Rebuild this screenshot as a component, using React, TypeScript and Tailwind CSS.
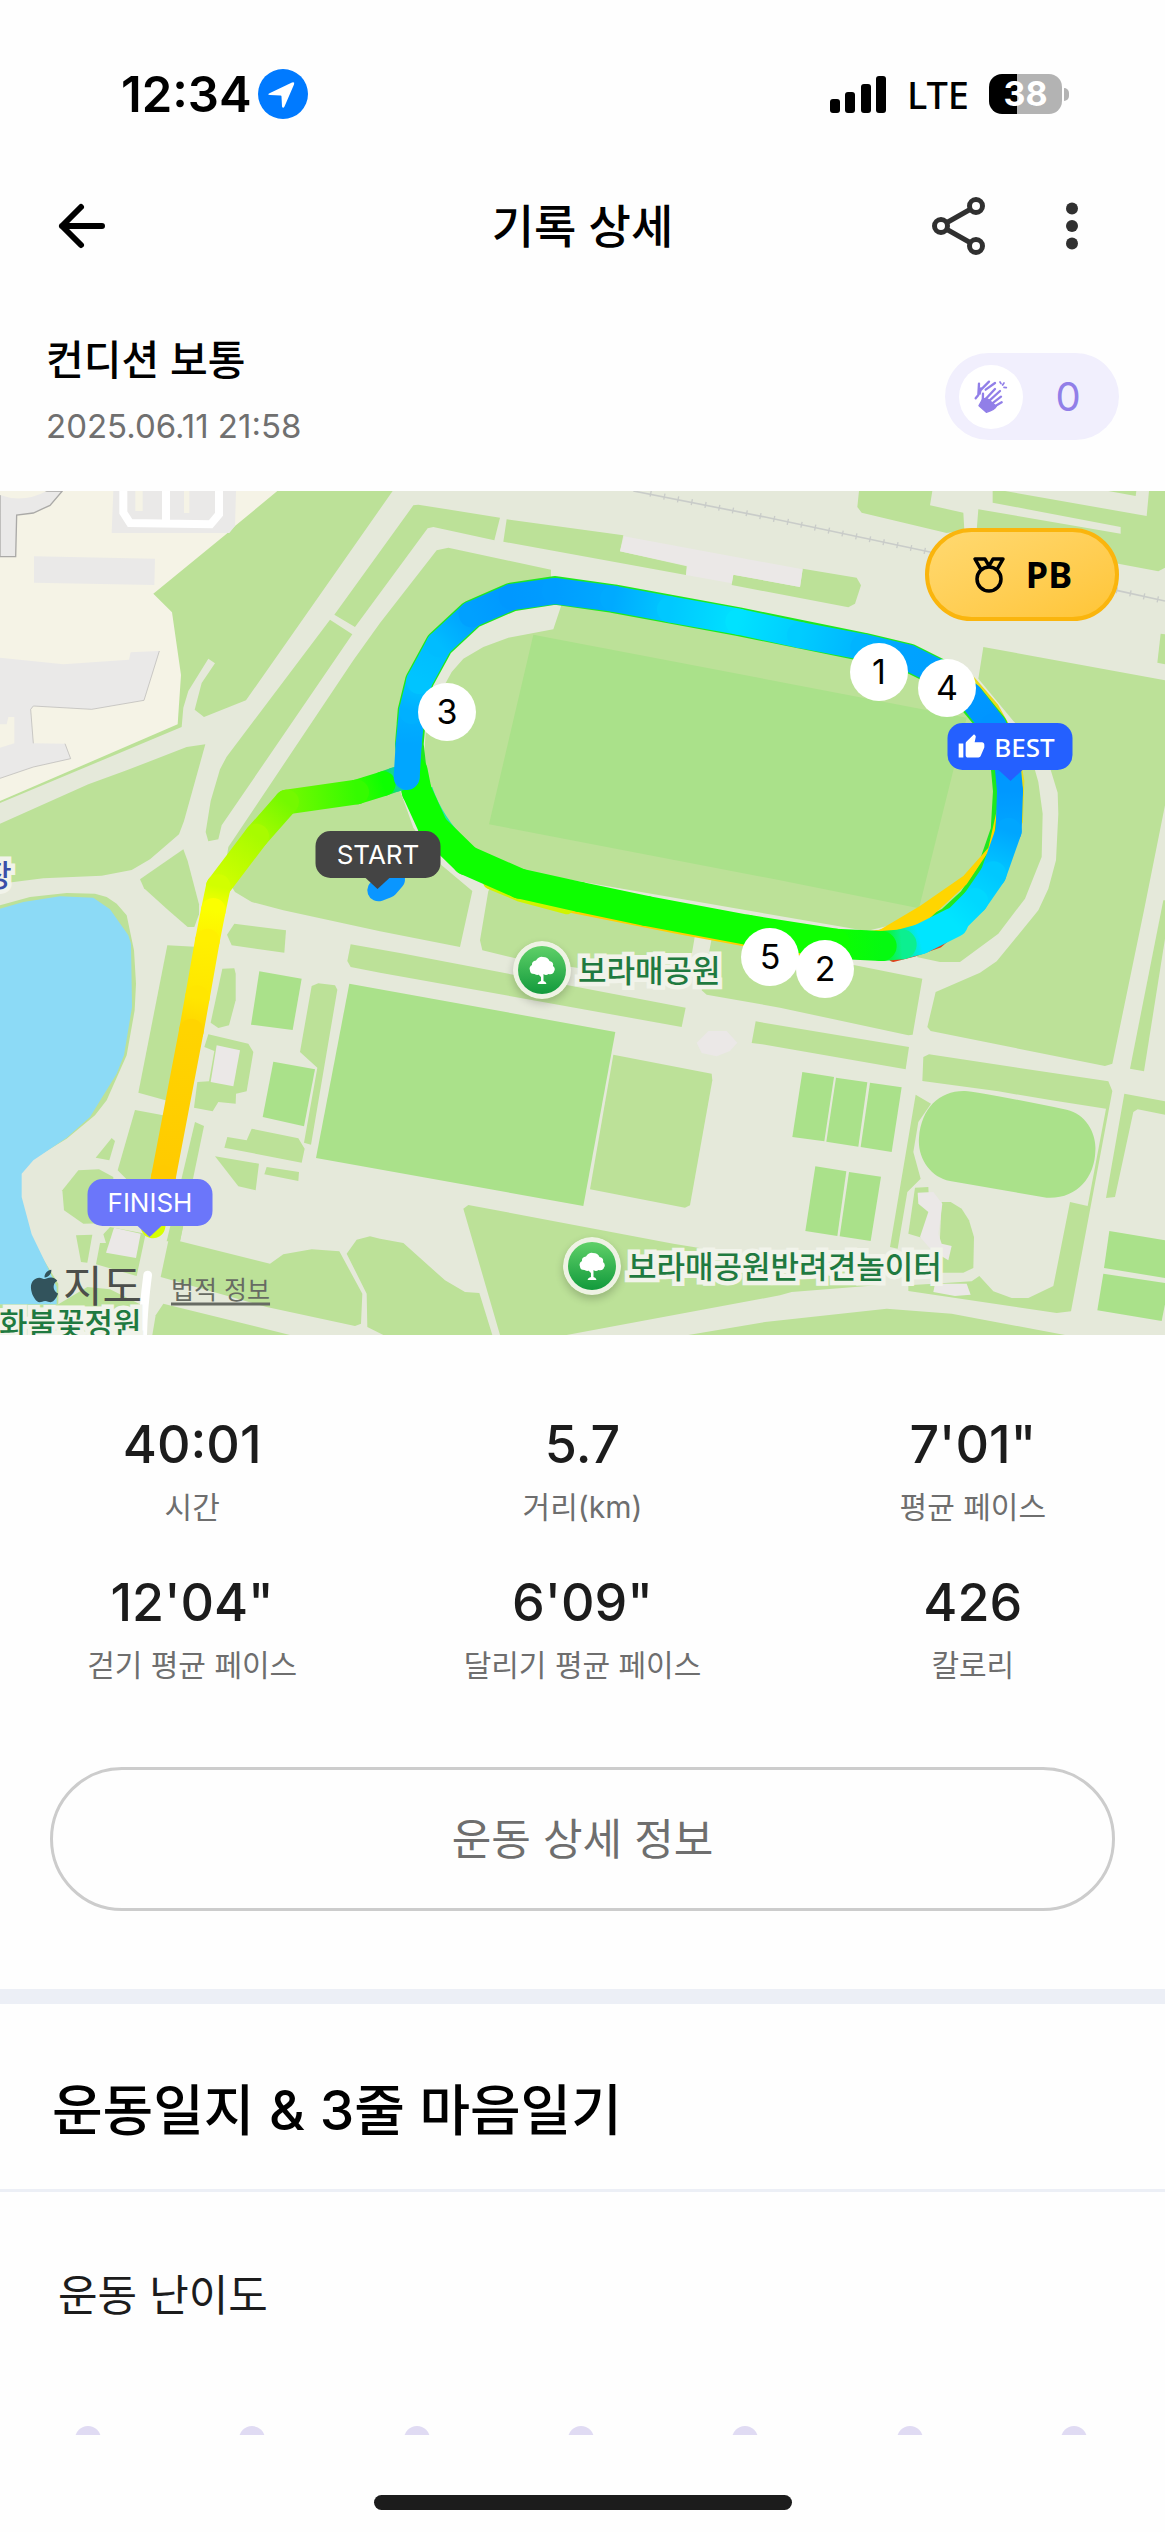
import { FaApple } from "react-icons/fa";
import { MdThumbUp } from "react-icons/md";

type Point = [x: number, y: number, color: string];

const MAP_W = 3495;
const MAP_H = 2532;

const parks = [
  "0,936 545,708 550,650 565,600 625,503 645,517 605,576 584,656 612,678 738,628 1178,0 0,0",
  "0,998 265,880 380,838 560,768 616,760 552,990 537,1030 450,1105 395,1137 305,1154 130,1162 0,1178",
  "550,1075 563,1110 597,1240 597,1270 583,1308 563,1308 505,1258 432,1192 420,1165",
  "990,386 1057,430 665,1003 655,1045 625,1051 617,1023 632,930 660,835 680,797",
  "1003,371 1240,43 1255,41 1500,80 1483,148 1300,108 1283,112 1065,408",
  "1520,85 1870,133 1860,181 2060,226 2058,252 1510,152",
  "2200,251 2400,288 2408,233 2570,260 2583,283 2565,338 2545,349 2195,282",
  "2577,0 2572,48 2585,65 2840,126 2893,118 2890,65 2790,43 2797,0",
  "2978,0 2978,35 3362,108 3362,128 2935,55 2930,118 3355,218 3475,241 3495,230 3495,0 3447,0 3440,75 3015,0",
  "3325,0 3407,15 3409,0",
  "1345,170 1310,178 1140,396 1060,508 685,1068 672,1150 705,1203 755,1233 850,1258 1140,1321 1380,1368 1417,1200 1325,1123 1240,1010 1200,898 1190,830 1190,700 1220,560 1310,420 1420,330 1560,280 1653,262 1653,236",
  "1685,340 1660,415 1525,440 1450,468 1390,503 1355,543 1280,680 1270,830 1310,950 1400,1060 1500,1130 2600,1320 2850,1260 2990,1100 3010,800 2960,650 2900,580 2750,500 1690,320",
  "2950,468 3495,568 3495,943 3432,1258 3337,1718 3315,1725 2792,1620 2782,1608 2807,1503 2940,1445 2990,1411 3115,1258 3145,1193 3168,1108 3175,968 3173,905 3150,830 3110,760 3040,690 2935,563",
  "3105,838 3115,873 3128,968 3125,1098 3075,1223 2995,1328 2880,1413 2820,1413 2750,1398 2850,1300 3000,1100 3060,900 3040,760",
  "3482,428 3495,430 3495,520 3472,515",
  "3490,1228 3495,1228 3495,1343 3432,1741 3390,1733",
  "3373,1808 3495,1831 3495,1871 3413,1855 3400,1863 3345,2118 3318,2121",
  "2787,1690 3325,1771 3337,1800 3213,2461 3170,2466 2725,2400 2725,2383 2800,2378 2915,2371 2938,2355 2980,2401 3035,2421 3085,2421 3160,2385 3210,2133 3263,2145 3318,1853 3155,1828 2995,1801 2767,1770 2770,1698",
  "2747,1811 2793,1838 2755,1893 2740,1983 2762,2063 2722,2103 2693,2273 2670,2268",
  "2745,2090 2785,2088 2790,2200 2765,2240 2725,2228",
  "2825,2133 2852,2133 2885,2153 2907,2188 2922,2238 2920,2331 2890,2345 2815,2345",
  "2065,2532 2295,2493 2660,2453 2855,2468 3195,2532",
  "1390,2153 1405,2142 2020,2258 2400,2320 2650,2355 2640,2382 2375,2403 2340,2413 1700,2532 1500,2532",
  "1140,2243 1210,2256 1335,2368 1395,2403 1438,2406 1477,2532 1150,2532 1102,2508 1100,2408 1040,2288 1070,2246 1110,2236",
  "540,2251 810,2318 850,2290 935,2275 1018,2281 1087,2408 1083,2498 1065,2505 800,2448 482,2358 515,2203 550,2203",
  "490,2438 870,2532 457,2532 467,2473",
  "502,1363 640,1370 540,1840 415,1805",
  "405,1857 530,1880 490,2100 385,2070 353,2038",
  "335,1941 345,1950 328,2008 287,2000",
  "235,2038 297,2035 340,2058 340,2196 250,2198 192,2158 187,2098",
  "585,1893 612,1905 540,2251 500,2251",
  "228,2233 277,2231 262,2315 243,2313",
  "310,2230 330,2208 437,2228 410,2355 288,2320 300,2256 318,2256",
  "175,2440 262,2388 330,2395 420,2440 420,2532 0,2532 0,2440",
  "703,1298 858,1318 853,1385 695,1363 681,1331",
  "667,1433 703,1432 707,1448 707,1528 687,1603 655,1611 632,1595",
  "625,1630 745,1658 760,1683 740,1801 708,1808 707,1838 655,1833 638,1861 582,1850 592,1773 627,1771 643,1680 613,1668",
  "1052,1360 1200,1386 2057,1550 2045,1608 1140,1445 1052,1428 1042,1410",
  "955,1477 1005,1483 1012,1496 933,1961 912,1955 952,1730 900,1683 935,1485",
  "755,1913 895,1942 914,1973 905,2015 673,1970 682,1938 740,1948",
  "645,1996 777,2018 767,2098 715,2086",
  "800,2028 897,2043 895,2070 793,2050",
  "1840,1691 2135,1748 2137,1768 2070,2143 2055,2150 1770,2095",
  "1465,1200 1440,1348 1447,1378 1560,1405 2060,1480 2085,1333 1900,1280 1500,1150",
  "2135,1343 2105,1498 2120,1511 2340,1550 2725,1633 2738,1631 2767,1463 2565,1423",
  "2267,1591 2727,1668 2717,1735 2295,1661 2255,1656",
];

const pitches = [
  "1600,431 2900,680 2860,838 2757,1252 2340,1168 1467,1000",
  "778,1441 905,1463 878,1617 753,1601",
  "820,1712 945,1735 912,1906 788,1878",
  "1048,1478 1846,1623 1750,2145 948,2001",
  "2407,1743 2502,1758 2473,1951 2377,1938",
  "2508,1760 2602,1774 2575,1967 2479,1952",
  "2610,1775 2705,1789 2675,1983 2582,1968",
  "2446,2026 2539,2041 2512,2235 2416,2220",
  "2547,2043 2643,2057 2612,2250 2519,2236",
  "3328,2220 3495,2248 3495,2361 3312,2331",
  "3310,2348 3495,2376 3495,2440 3485,2490 3292,2458",
];

const buildings = [
  "1872,136 2408,235 2400,288 2200,251 2195,277 2058,252 2062,224 1860,181",
  "650,1663 720,1678 700,1786 632,1773",
  "342,2210 422,2228 408,2301 318,2285",
  "2753,2105 2800,2103 2827,2138 2815,2228 2825,2258 2855,2265 2845,2308 2795,2278 2760,2238 2785,2163 2755,2138",
  "2805,2378 2900,2378 2912,2411 2865,2415 2800,2403",
];

const greenLap: Point[] = [
  [2860, 1295, "#00e5ff"],
  [2760, 1345, "#00e5ff"],
  [2705, 1360, "#0cef90"],
  [2645, 1365, "#05fa10"],
  [2505, 1358, "#0dff00"],
  [2240, 1316, "#0dff00"],
  [1940, 1260, "#0dff00"],
  [1740, 1218, "#0dff00"],
  [1560, 1178, "#0dff00"],
  [1400, 1108, "#0dff00"],
  [1300, 1010, "#0dff00"],
  [1250, 900, "#0dff00"],
  [1238, 840, "#0dff00"],
];

const blueLap: Point[] = [
  [1220, 858, "#00a6ff"],
  [1226, 760, "#00a6ff"],
  [1236, 660, "#00b0ff"],
  [1258, 570, "#00c4ff"],
  [1318, 460, "#00bcff"],
  [1415, 370, "#00a0ff"],
  [1535, 318, "#0098ff"],
  [1665, 300, "#009dff"],
  [1840, 323, "#00aaff"],
  [2010, 355, "#00c8ff"],
  [2215, 392, "#00e2ff"],
  [2400, 432, "#00ccff"],
  [2590, 468, "#00b4ff"],
  [2725, 500, "#00a2ff"],
  [2830, 552, "#00a0ff"],
  [2910, 615, "#0098ff"],
  [2980, 705, "#0094ff"],
  [3020, 790, "#0096ff"],
  [3030, 900, "#0098ff"],
  [3026, 1020, "#00a6ff"],
  [2980, 1150, "#00c8ff"],
  [2925, 1230, "#00d8ff"],
  [2860, 1295, "#00e5ff"],
];

const exitLeg: Point[] = [
  [1222, 856, "#0fb4d8"],
  [1185, 866, "#14d29a"],
  [1150, 878, "#0dff00"],
  [1070, 903, "#35fb00"],
  [860, 933, "#74f900"],
  [770, 1035, "#a8fb00"],
  [655, 1187, "#d2ff00"],
  [640, 1258, "#fbff00"],
  [622, 1350, "#fff000"],
  [592, 1520, "#ffe600"],
  [574, 1620, "#ffd400"],
  [490, 2060, "#ffca00"],
  [459, 2205, "#d8ff00"],
];

const kmMarkers = [
  { label: "3", x: 447, y: 712 },
  { label: "1", x: 879, y: 672 },
  { label: "4", x: 947, y: 688 },
  { label: "5", x: 770, y: 957 },
  { label: "2", x: 825, y: 969 },
];

const stats = [
  { value: "40:01", label: "시간" },
  { value: "5.7", label: "거리(km)" },
  { value: "7'01\"", label: "평균 페이스" },
  { value: "12'04\"", label: "걷기 평균 페이스" },
  { value: "6'09\"", label: "달리기 평균 페이스" },
  { value: "426", label: "칼로리" },
];

// Map points are kept on a 1165-wide page whose map starts at y=491
const place = (x: number, y: number) => ({
  left: `${(x / 1165) * 100}%`,
  top: `${((y - 491) / 844) * 100}%`,
});

function StatusBar() {
  return (
    <div className="flex h-[132px] items-center justify-between pt-[56px] pr-[96px] pl-[121px]">
      <div className="flex items-center gap-[6px]">
        <span className="text-[49px] leading-none font-semibold text-black">12:34</span>
        <svg viewBox="0 0 50 50" className="size-[50px]">
          <circle cx="25" cy="25" r="25" fill="#007aff" />
          <path d="M12 24 34 13.500Q37 12.500 36 15.500L26.500 37.500Q25 40 24 37.500L23.500 27.500Q23.500 26.500 22.500 26.500L12 26Q8.500 25.500 12 24Z" fill="#fff" />
        </svg>
      </div>
      <div className="flex items-center">
        <svg viewBox="0 0 57 37" className="h-[37px] w-[57px]">
          <rect x="0" y="23" width="10" height="14" rx="3" />
          <rect x="15" y="16" width="10" height="21" rx="3" />
          <rect x="31" y="8" width="10" height="29" rx="3" />
          <rect x="46" y="0" width="10" height="37" rx="3" />
        </svg>
        <span className="ml-[20px] font-['Noto_Sans'] text-[38px] leading-none font-medium">LTE</span>
        <div className="ml-[20px] flex h-[40px] w-[73px] items-center justify-center rounded-[13px] bg-[linear-gradient(90deg,#000_39%,#b3b3b3_39%)] text-[34px] leading-none font-bold text-white">
          38
        </div>
        <div className="ml-[2px] h-[13px] w-[5px] rounded-r-full bg-[#b3b3b3]" />
      </div>
    </div>
  );
}

function Header() {
  return (
    <header className="grid h-[188px] grid-cols-[1fr_auto_1fr] items-center px-[56px]">
      <button type="button" aria-label="뒤로" className="justify-self-start">
        <svg viewBox="0 0 50 50" className="size-[50px]" fill="none" stroke="#000" strokeWidth="6" strokeLinecap="round" strokeLinejoin="round">
          <path d="M46 25H6M25 6 6 25l19 19" />
        </svg>
      </button>
      <h1 className="text-[46px] leading-none font-medium text-black">기록 상세</h1>
      <div className="flex items-center gap-[74px] justify-self-end pr-[24px]">
        <button type="button" aria-label="공유">
          <svg viewBox="0 0 54 60" className="h-[60px] w-[54px]" fill="none" stroke="#303030" strokeWidth="5">
            <circle cx="10" cy="30" r="6.500" />
            <circle cx="45" cy="10" r="6.500" />
            <circle cx="45" cy="50" r="6.500" />
            <path d="M16 26.500 39 13.500M16 33.500 39 46.500" />
          </svg>
        </button>
        <button type="button" aria-label="더보기">
          <svg viewBox="0 0 26 48" className="h-[48px] w-[26px]" fill="#303030">
            <circle cx="13" cy="6.500" r="6" />
            <circle cx="13" cy="24" r="6" />
            <circle cx="13" cy="41.500" r="6" />
          </svg>
        </button>
      </div>
    </header>
  );
}

function ClapIcon() {
  return (
    <svg viewBox="105 103 102 102" className="size-[34px]" fill="none" stroke="#917fe8" strokeWidth="7" strokeLinecap="round" strokeLinejoin="round">
      {/* Back hand */}
      <path d="M120 114 118 148 110 158M124 134 150 108M140 132 168 112M126 128 122 144" />
      {/* Front hand */}
      <path d="M140 160 168 130M148 168 183 136M156 176 186 153M164 184 188 170M132 144 131 172" />
      <path d="M131 160Q140 156 146 160L172 182Q168 192 142 200L120 180Z" fill="#917fe8" strokeWidth="4" />
      <path d="M183 109 186 114M195 112 191 118M202 126 195 125" strokeWidth="5" />
    </svg>
  );
}

function Condition() {
  return (
    <section className="flex h-[171px] items-center justify-between px-[46px] pb-[18px]">
      <div className="pb-[8px]">
        <h2 className="text-[41px] leading-[60px] font-medium text-black">컨디션 보통</h2>
        <time className="mt-[6px] block text-[33px] leading-[60px] text-[#707070]">2025.06.11 21:58</time>
      </div>
      <button type="button" className="flex h-[87px] w-[174px] items-center rounded-full bg-[#f1effd] pl-[14px] text-[#917fe8]">
        <span className="flex size-[64px] items-center justify-center rounded-full bg-white">
          <ClapIcon />
        </span>
        <span className="flex-1 pr-[6px] text-center text-[40px] leading-none">0</span>
      </button>
    </section>
  );
}

function Track({ id, points, width }: { id: string; points: Point[]; width: number }) {
  return (
    <g strokeWidth={width} strokeLinecap="round">
      {points.slice(1).map(([x2, y2, to], i) => {
        const [x1, y1, from] = points[i];
        return (
          <g key={i}>
            <linearGradient id={`${id}-${i}`} gradientUnits="userSpaceOnUse" x1={x1} y1={y1} x2={x2} y2={y2}>
              <stop offset="0" stopColor={from} />
              <stop offset="1" stopColor={to} />
            </linearGradient>
            <path d={`M${x1} ${y1}L${x2} ${y2}`} stroke={`url(#${id}-${i})`} />
          </g>
        );
      })}
    </g>
  );
}

function MapDrawing() {
  return (
    <svg viewBox={`0 0 ${MAP_W} ${MAP_H}`} className="block w-full bg-[#e5e9da]">
      <g fill="#bce198">
        {parks.map((points) => (
          <polygon key={points} points={points} />
        ))}
      </g>
      <g fill="#aae18a">
        {pitches.map((points) => (
          <polygon key={points} points={points} />
        ))}
        <path d="M2895 1800Q2935 1802 3200 1856C3260 1870 3290 1930 3286 1980C3284 2060 3230 2125 3140 2120L2850 2070C2790 2058 2752 2000 2757 1940C2764 1850 2820 1798 2895 1800Z" />
      </g>

      {/* Lake */}
      <path d="M0 1243 90 1218 200 1206 285 1208 320 1218 350 1238 380 1273 402 1378 408 1478 404 1558 380 1693 320 1828 285 1873 200 1943 85 2013 55 2058 52 2118 95 2248 175 2378 175 2440H0Z" fill="#bce198" />
      <path d="M0 1253 70 1233 180 1216 280 1220 330 1255 385 1333 393 1358 396 1548 372 1693 350 1748 270 1878 200 1940 100 2008 65 2048 65 2118 95 2230 145 2333 170 2388 170 2440H0Z" fill="#8cdaf6" />

      {/* Residential block */}
      <polygon points="0,0 832,0 705,105 680,128 460,308 516,364 543,552 533,700 0,930" fill="#f5f3e6" />
      <g fill="#eae9e8">
        <path d="M0 0H187L150 43 100 66 50 72 47 197H0Z" stroke="#aaa9a7" strokeWidth="4" />
        <path d="M0 12Q70 38 140 0H0Z" fill="#f5f3e6" />
        <polygon points="102,196 465,203 463,282 102,275" />
        <polygon points="340,0 708,0 705,105 688,126 335,126" />
        <path d="M0 500 190 520 387 506 392 484 478 480 432 628 275 655 100 645 92 655 100 757 195 758 212 803 100 828 0 862V770L43 757V678H25L20 700H0Z" />
        <path d="M478 480 432 628 275 655 100 645 92 655 100 757M195 758 212 803 100 828 0 862" fill="none" stroke="#b5b4b2" strokeWidth="2" />
      </g>
      <path d="M406 0H428V60H406ZM552 0H568V66H552Z" fill="#f5f3e6" />
      <path d="M370 0V65L390 96 632 100 657 70V0M498 0V98" fill="none" stroke="#fff" strokeWidth="24" />
      <path d="M443 2352Q430 2450 428 2532" fill="none" stroke="#fff" strokeWidth="26" strokeLinecap="round" />

      <g fill="#ebe8e7">
        {buildings.map((points) => (
          <polygon key={points} points={points} />
        ))}
        <path d="M2090 1655 2125 1620 2180 1620 2212 1655 2190 1680 2150 1696 2105 1686Z" />
      </g>
      <g fill="none" stroke="#c9ccc9">
        <path d="M1900 0 2295 78 2790 183 3350 298 3495 330" strokeWidth="5" />
        <path d="M1950 8 2295 78 2790 183 3350 298 3495 330" strokeWidth="18" strokeDasharray="4 38" />
      </g>

      {/* Earlier laps peeking out from under the last one */}
      <g fill="none" strokeLinejoin="round" strokeLinecap="round">
        <path d="M1470 1170 1560 1205 1700 1243 2040 1310 2230 1345 2400 1372 2600 1386" stroke="#ffd000" strokeWidth="40" />
        <path d="M1470 1175 1560 1212 1700 1250" stroke="#d0f400" strokeWidth="40" />
        <path d="M2680 1399 2745 1382 2815 1357 2860 1319" stroke="#e0401c" strokeWidth="28" />
        <path d="M2910 570 2980 650 3035 750 3056 870 3052 990" stroke="#e6dc20" strokeWidth="34" />
        <path d="M1238 850 1228 760 1236 660 1258 570 1318 460 1415 370 1535 318 1665 298 1840 323 2215 392 2590 468 2725 500 2830 552 2910 620 2980 705 3012 790 3022 900 3015 1020 2970 1150 2915 1230 2850 1290 2760 1338 2640 1360" stroke="#1fe81f" strokeWidth="86" />
      </g>
      <path d="M2992 950 2965 1070 2890 1155 2760 1245 2640 1316 2560 1325 2640 1345 2780 1290 2900 1180 2980 1060Z" fill="#ffd500" />
      <path d="M1290 890Q1320 980 1400 1060" fill="none" stroke="#16e8b0" strokeWidth="14" />
      <Track id="lap-green" points={greenLap} width={90} />
      <Track id="exit" points={exitLeg} width={74} />
      <Track id="lap-blue" points={blueLap} width={78} />
      <path d="M1135 1198 1162 1188 1182 1165" fill="none" stroke="#0a96ff" strokeWidth="66" strokeLinecap="round" strokeLinejoin="round" />
    </svg>
  );
}

function Callout({ text, x, y, className, tail, best }: { text: string; x: number; y: number; className: string; tail: string; best?: boolean }) {
  return (
    <div className="absolute flex -translate-x-1/2 flex-col items-center" style={place(x, y)}>
      <div className={`flex h-[47px] w-[125px] items-center justify-center gap-[9px] rounded-[15px] text-[26px] leading-none text-white ${className}`}>
        {best && <MdThumbUp size={28} />}
        {text}
      </div>
      <svg viewBox="0 0 26 12" className={`-mt-px h-[12px] w-[26px] ${tail}`} fill="currentColor">
        <path d="M0 0H26L13 12Z" />
      </svg>
    </div>
  );
}

function ParkLabel({ name, x, y }: { name: string; x: number; y: number }) {
  return (
    <div className="absolute flex -translate-y-1/2 items-center gap-[7px]" style={place(x, y)}>
      <svg viewBox="0 0 58 58" className="size-[58px] rounded-full shadow-[0_4px_8px_rgba(0,0,0,0.2)]">
        <linearGradient id="pin" x1="0" y1="0" x2="0" y2="1">
          <stop offset="0" stopColor="#5fd068" />
          <stop offset="1" stopColor="#129a3c" />
        </linearGradient>
        <circle cx="29" cy="29" r="29" fill="#eef2e4" />
        <circle cx="29" cy="29" r="24" fill="url(#pin)" />
        <path d="M28 32.500Q25 35 21.500 33Q17 33 17 29.500Q15.500 26 19 24Q18.500 20 23 19.500Q26 15 30 16Q35 16 36.500 20Q41 21 40 25Q43 27.500 41 30.500Q40 34 35.500 33Q33 35 30.500 33V40Q33 40.500 33.500 43H24.500Q25 40.500 28 40V36L25.500 33.500Z" fill="#fff" />
      </svg>
      <span className="text-[31px] leading-none font-medium whitespace-nowrap text-[#1f7a40] [paint-order:stroke_fill] [-webkit-text-stroke:9px_#f1f3ea]">{name}</span>
    </div>
  );
}

function RouteMap() {
  return (
    <section className="relative overflow-hidden">
      <MapDrawing />

      {kmMarkers.map(({ label, x, y }) => (
        <span
          key={label}
          className="absolute flex size-[58px] -translate-1/2 items-center justify-center rounded-full bg-white text-[34px] leading-none text-black"
          style={place(x, y)}
        >
          {label}
        </span>
      ))}

      <Callout text="START" x={378} y={831} className="bg-[#444444]" tail="text-[#444444]" />
      <Callout text="BEST" x={1010} y={723} className="bg-[#2460ff] pr-[8px] font-['Noto_Sans'] font-medium" tail="text-[#2460ff]" best />
      <Callout text="FINISH" x={150} y={1179} className="bg-[#6b76fa]" tail="text-[#6b76fa]" />

      <ParkLabel name="보라매공원" x={513} y={970} />
      <ParkLabel name="보라매공원반려견놀이터" x={563} y={1266} />
      <span className="absolute -translate-y-1/2 text-[30px] leading-none font-medium text-[#3a4fa8] [paint-order:stroke_fill] [-webkit-text-stroke:9px_#f1f3ea]" style={place(-16, 875)}>
        장
      </span>
      <span className="absolute -translate-y-1/2 text-[31px] leading-none font-medium text-[#1f7a40] [paint-order:stroke_fill] [-webkit-text-stroke:9px_#f1f3ea]" style={place(-1, 1323)}>
        화불꽃정원
      </span>

      <div className="absolute flex -translate-y-1/2 items-center text-[#32535c]" style={place(26, 1286)}>
        <FaApple size={37} />
        <span className="text-[43px] leading-none text-[#4c4f4b]">지도</span>
      </div>
      <a href="#legal" className="absolute -translate-y-1/2 text-[25px] leading-none text-[#676b63] underline decoration-3 underline-offset-4" style={place(171, 1290)}>
        법적 정보
      </a>

      <div className="absolute top-[37px] right-[46px] flex h-[93px] w-[194px] items-center justify-center gap-[20px] rounded-full border-4 border-[#fab50d] bg-linear-to-br from-[#ffd970] to-[#ffc535] text-black">
        <svg viewBox="0 0 34 36" className="h-[36px] w-[34px]" fill="none" stroke="#000" strokeWidth="3.500" strokeLinejoin="round">
          <circle cx="17" cy="22" r="12" />
          <path d="M9 12.500 3 2H13L17 9 21 2H31L25 12.500M13 2 17 9" />
        </svg>
        <span className="font-['Noto_Sans'] text-[36px] leading-none font-bold">PB</span>
      </div>
    </section>
  );
}

function Summary() {
  return (
    <section className="pt-[74px]">
      <dl className="grid grid-cols-3 gap-x-[6px] gap-y-[34px] text-center">
        {stats.map(({ value, label }) => (
          <div key={label} className="flex flex-col-reverse">
            <dt className="text-[30px] leading-[52px] text-[#6e6e6e]">{label}</dt>
            <dd className="text-[52px] leading-[72px] font-medium text-[#1c1c1c]">{value}</dd>
          </div>
        ))}
      </dl>
      <div className="px-[50px] pt-[76px] pb-[78px]">
        <button type="button" className="h-[144px] w-full rounded-full border-[3px] border-[#cccccc] text-[43px] leading-none text-[#6e6e6e]">
          운동 상세 정보
        </button>
      </div>
    </section>
  );
}

function Journal() {
  return (
    <section className="border-t-[15px] border-[#eceff6]">
      <h2 className="border-b-[3px] border-[#eceff6] px-[52px] pt-[73px] pb-[46px] text-[55px] leading-[66px] font-medium text-black">
        운동일지 &amp; 3줄 마음일기
      </h2>
      <h3 className="px-[58px] pt-[71px] text-[43px] leading-[64px] text-[#1c1c1c]">운동 난이도</h3>
      <div className="mt-[99px] flex h-[9px] justify-between overflow-hidden pr-[78px] pl-[75px]">
        {[1, 2, 3, 4, 5, 6, 7].map((level) => (
          <span key={level} className="size-[26px] shrink-0 rounded-full bg-[#e0dbf3]" />
        ))}
      </div>
    </section>
  );
}

export default function App() {
  return (
    <main className="w-full bg-[#fefefe] font-[Inter,'Noto_Sans_CJK_KR',sans-serif]">
      <StatusBar />
      <Header />
      <Condition />
      <RouteMap />
      <Summary />
      <Journal />
      <div className="flex justify-center pt-[60px] pb-[23px]">
        <div className="h-[15px] w-[418px] rounded-full bg-[#1c1c1c]" />
      </div>
    </main>
  );
}
